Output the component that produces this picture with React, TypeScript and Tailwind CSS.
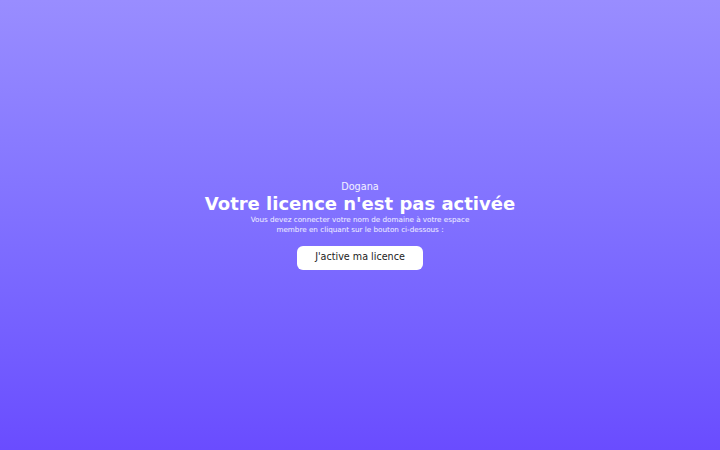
export default function App() {
  return (
    <div className="flex h-[450px] w-full flex-col items-center justify-center bg-gradient-to-b from-[#998dff] to-[#6a4cff] font-['DejaVu_Sans',sans-serif] text-white">
      <p className="text-[9.7px] leading-[12px] text-white/90">Dogana</p>
      <h1 className="text-[18px] font-bold leading-[22px]">Votre licence n'est pas activée</h1>
      <p className="text-center text-[7.2px] leading-[10px] text-white/90">
        Vous devez connecter votre nom de domaine à votre espace
        <br />
        membre en cliquant sur le bouton ci-dessous :
      </p>
      <button className="mt-[11px] h-[24px] w-[126px] rounded-[6px] bg-white text-[9.6px] text-[#222]">
        J'active ma licence
      </button>
    </div>
  )
}
